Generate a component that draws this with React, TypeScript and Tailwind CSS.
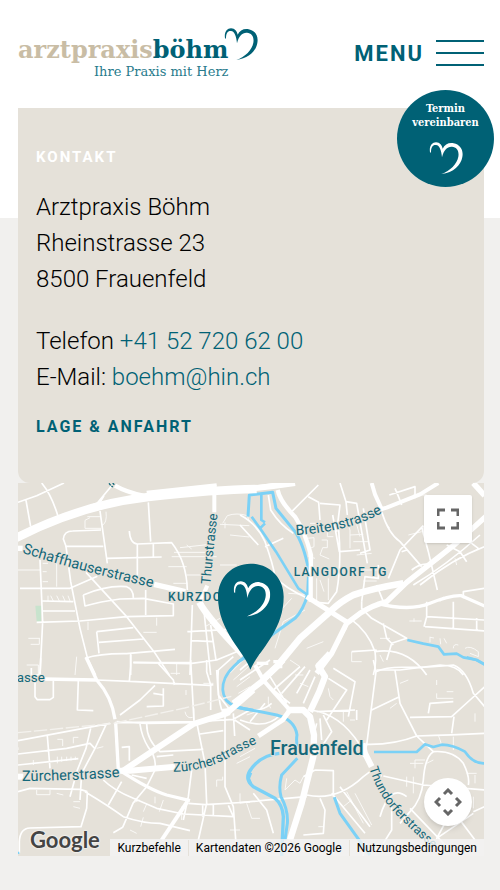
import type { ReactNode } from "react";

type Road = { d: string; width: number };

type Tile = {
  name: string;
  offset: string;
  park?: string;
  water: Road[];
  streets: string;
  lanes: string;
  roads: Road[];
};

const heartPath =
  "M2 31C-1 13 8 1 20 1C32 1 38 11 40 20C46 7 59 1 73 4C92 8 103 23 99 45C95 69 73 92 36 96C63 86 83 66 87 44C90 26 82 15 68 14C54 13 43 24 38 46C36 25 31 10 20 9C10 8 5 16 5 32Z";

// The map is split into four tiles, each drawn in its own coordinates.
const tiles: Tile[] = [
  {
    name: "north-west",
    offset: "translate(-54 -24)",
    park: "M106 392L125 392L123 440L110 440Z",
    water: [],
    streets:
      "M54 82L110 62L192 24M125 24Q155 60 174 124M78 76L92 155M335 32L292 84L190 124M312 62L290 100M198 214L190 192Q192 168 218 168L303 165M195 214H310M300 108L322 265M198 214L212 320L240 460L262 548L287 600M320 250L485 246M445 82L452 200M388 168Q390 205 412 207L515 203Q560 260 562 345M412 207V302M460 205V245M258 292L380 425L462 530L508 600M120 255L128 440L120 600M60 340H210L292 304M128 378L220 380M128 408H225M110 442L240 438L380 425L520 422L520 385M250 360Q320 330 380 335Q400 342 400 368M250 360L255 393Q300 380 360 372L430 370L520 387M437 345V420M290 470L400 458M290 470L297 535M297 502L430 492M255 550Q300 535 380 536L525 523M392 540V600M400 562L570 566L650 555L710 530M577 390L570 600M610 390L632 600M562 470L690 463M575 497L642 500M632 450L648 555",
    lanes:
      "M270 128L255 136V160H303M302 125H262M318 110Q322 145 306 151M54 285H122M170 255V335M128 265H144M128 290H140M128 320H144M144 378V362M160 378L152 362M178 378L170 362M195 378L188 362M210 378L204 362M264 440V465M470 428V452M430 472H470M230 545L225 600M85 490H120M92 508H118V490M80 570H115V600M515 245H650M522 232L628 232M540 218L630 208M575 222L560 210M505 275H560M560 300H610M520 325H562M668 145L682 122Q710 112 742 122L748 140M660 148L748 152M675 142V160M690 180L748 186M660 270H710M615 455L660 430M530 565V600",
    roads: [
      { d: "M40 193Q245 88 445 66T770 42", width: 25 },
      { d: "M345 32Q380 52 430 62", width: 13 },
      { d: "M440 52L650 30", width: 10 },
      { d: "M643 30V112", width: 12 },
      { d: "M462 328L556 350", width: 16 },
      { d: "M54 220H68", width: 16 },
      { d: "M622 332L600 380", width: 12 },
      { d: "M598 382Q620 425 730 540", width: 20 },
    ],
  },
  {
    name: "north-east",
    offset: "translate(666 -24)",
    water: [
      { d: "M24 125L28 60L98 52L108 100L165 170Q190 205 206 285L203 358Q190 405 165 430L95 480L20 545L-8 562", width: 9 },
      { d: "M64 60V135L75 142", width: 8 },
      { d: "M35 125L60 160L75 145M57 155L108 230L175 340L203 360", width: 8 },
      { d: "M502 495L550 506L595 515L612 538L650 536L670 547L710 555L734 568", width: 8 },
    ],
    streets:
      "M85 60L92 105Q120 150 160 175M0 120Q50 145 75 200Q100 270 105 305Q135 340 200 368M0 150L55 210M130 190L75 215M235 30L150 115M205 65L236 82L240 135M240 85L300 90L290 170M300 24L318 80L350 85L382 265M318 80L322 120M296 165Q305 270 290 350L265 385L230 382M278 120L298 230L360 225M370 100L390 225L360 235M465 40Q480 75 485 90M448 60L525 35V70M425 110Q445 175 480 200L545 275M550 152L480 225L445 310M545 155L565 230L592 345M515 285Q545 260 575 270M485 230L500 225M500 320L600 250L734 120M520 330Q620 270 720 180M540 330Q640 250 734 215M365 380L375 305L415 310V270M410 330L430 380M365 380V400L395 430L500 490L455 505L440 555M330 430Q385 470 405 530Q410 570 400 600M430 445L440 490L460 510M405 530Q500 515 560 600M335 530L410 525M410 585H480L600 570Q650 570 670 600M560 380L560 425L552 455M560 425L734 435M555 455L734 468M640 380V460M670 370V350L734 340M710 430V465M620 210L660 230L680 260M675 190L715 220",
    lanes:
      "M210 145H236V165M200 190L222 188V215L205 222V245L225 250M240 165L262 160V185H280M245 195H262V218H248L240 240L268 252M320 140L330 165V220M345 130L360 185M340 200H385M330 180L370 178M350 240L395 235M505 180L545 170M550 180V152M645 250L650 270M370 285H410M370 318H410M380 345H420M230 310V380M265 310V375M240 315L252 350M145 355L195 358M155 370L100 430M195 405L130 440L105 520M420 540L430 560M335 530V560H365M570 485V502M570 487L582 489M600 490L602 508M612 490L620 505M640 520Q640 505 655 510M675 520Q690 510 715 530V545L690 535M508 438H545M522 430V440M440 150L450 160M520 60H560M700 24L715 40M600 380L610 365M50 500L100 470M200 520L250 500M320 460L300 490M420 490H450",
    roads: [
      { d: "M-20 46Q70 38 165 24", width: 18 },
      { d: "M-10 44L150 24", width: 12 },
      { d: "M113 45Q120 80 165 125Q195 170 213 240L212 300V380", width: 13 },
      { d: "M200 365L322 442", width: 15 },
      { d: "M395 24L405 58L425 102L440 98L540 58L595 24", width: 12 },
      { d: "M734 128L640 212L500 322L440 380Q400 390 360 415L320 445L275 535L230 595", width: 16 },
      { d: "M490 325Q400 340 340 360Q300 380 270 410L180 490L110 575L70 612", width: 20 },
      { d: "M410 385Q510 410 570 385T664 362L734 393", width: 10 },
      { d: "M700 24L734 62", width: 17 },
      { d: "M50 565H85", width: 10 },
      { d: "M100 560H122V580", width: 10 },
    ],
  },
  {
    name: "south-west",
    offset: "translate(-54 531)",
    water: [
      { d: "M750 -20Q690 20 675 55Q660 90 678 120Q700 145 760 150", width: 8 },
      { d: "M752 338L745 355L752 372", width: 10 },
      { d: "M54 575V582", width: 8 },
    ],
    streets:
      "M122 -5L120 50M105 65V110L112 119H150L160 112V62M94 24V45H120M235 60L232 150L280 152M290 60L390 64L630 76L640 74M392 -20V20L388 64M400 8H575M475 10L520 60L523 75M465 76L420 120L360 165M345 188L590 185L700 178L750 150M54 242L330 190M54 282L200 265L270 250L284 265M54 315L235 296M142 228L150 325M272 205L258 265L232 330L210 410M320 190L285 265L245 340L240 420M350 185L440 190L575 188M420 192Q425 230 445 262Q470 290 465 330L440 380L400 428L368 502M440 192Q440 240 480 275L610 268M365 262L388 260V302M590 186L615 310L620 430L595 540M600 222L670 212M675 165V380L700 440L710 580M575 330L565 410L550 480M54 395L90 385L240 388L262 395M255 395Q330 440 370 470Q430 490 480 490L570 512M310 360Q340 390 400 415L470 445L550 462L700 470M368 502L340 518M365 365L325 435M262 395L260 445L243 500L90 504Q60 505 58 545V580M565 430L615 434L750 426M608 436V470M640 432V468M685 436L700 470M572 0L582 185M620 0V35L632 75V150M650 30L655 105L690 150M700 160L704 228M704 180L750 210M665 150Q650 100 655 30L700 -10M490 85V138L440 140M490 105L460 100M395 345L440 355M470 290L520 285",
    lanes:
      "M54 262V270M110 390V404H150V390M100 315V300M172 310V290M185 305V290M200 303V290M213 302V290M226 300V290M172 238H188V258M220 250V232H235M190 405L170 400M220 425H240M220 440L240 445M290 265L310 260M400 428L420 420M440 432L430 455M490 420L478 455M430 472L422 500M390 510L410 520M545 480V440M465 430V410M555 155Q560 178 578 172M582 145V180M512 40H540M558 90V105M650 380V360H668V350M710 310L750 290M690 510H720M708 545V580M720 400V430M690 40L730 0M700 60L745 20M710 80L750 50M715 100L750 80M610 70H640",
    roads: [
      { d: "M130 57L290 60", width: 10 },
      { d: "M258 -8L290 60Q335 110 345 178", width: 10 },
      { d: "M347 188L355 330", width: 10 },
      { d: "M365 335L580 192L680 160L760 90", width: 18 },
      { d: "M350 332H390L525 320", width: 18 },
      { d: "M365 335Q450 390 500 405L570 422", width: 10 },
      { d: "M562 425L485 540", width: 12 },
      { d: "M54 350H70", width: 18 },
      { d: "M690 155L665 158", width: 22 },
    ],
  },
  {
    name: "south-east",
    offset: "translate(666 531)",
    water: [
      { d: "M-10 142Q60 155 110 165Q165 180 171 225Q168 240 172 260M172 295L125 345Q115 380 123 410Q145 450 142 490L135 540", width: 9 },
      { d: "M118 280Q65 285 35 325Q10 355 40 380L105 415Q128 435 130 470L125 590", width: 10 },
      { d: "M402 276H530L555 253L580 261L605 254Q640 255 675 275Q700 312 734 310", width: 8 },
      { d: "M283 412L300 460L350 530L390 585", width: 9 },
      { d: "M680 -8L710 0L734 14", width: 8 },
    ],
    streets:
      "M400 0L408 35L380 255L370 290M408 35Q440 20 500 22T640 15Q680 30 700 100L734 140M465 30L480 130L530 228M395 150L475 112M510 172L635 170L690 120L734 80M565 160L570 130L640 125M635 220L642 170M380 253Q460 255 530 228Q640 225 734 220M530 228L580 275Q640 270 670 310Q690 350 685 375M580 275Q555 290 550 360Q545 420 510 455L480 490M430 348L550 375M734 390L550 375M510 445L620 560M620 480L590 535L700 460M700 455L734 440M660 480L705 540M200 405Q290 425 370 350L390 335M0 428Q80 420 200 410M225 330L280 332V410M190 350L225 330M240 415L255 450L250 520L190 525M40 400L80 450L100 520M370 545V590M455 440V510L430 550M420 470Q450 370 500 410M300 380L390 500M275 400L375 520M210 150Q300 160 360 255M230 155L345 150M250 165L275 215L225 290M265 55L320 90L260 180M280 25L345 65L325 170M350 150V180M180 20L100 90L150 130M195 20L125 100M210 30L170 100M225 50L190 130M90 50L140 130M230 190L215 250M240 175L245 240M0 180Q80 210 120 165M15 145Q60 160 95 130M30 185L75 130M0 60L90 0M0 30L60 -20",
    lanes:
      "M20 165L50 155M85 110V130L92 145M40 80L20 100M150 0L180 20M165 45H190M180 70L205 80M265 85L270 110L280 120M310 155V185M345 180H330M480 70L505 60M590 100V115H640M590 75V60M640 95H620M470 130L450 145M525 325V300H555M510 310H550M680 340H710M705 345V370M640 230V270M595 225L605 255M580 300L560 310M20 430L35 475H60M140 355L135 390L165 360L180 370L190 350M0 290L45 265M320 395L370 490M345 400L395 495M310 440L335 420M420 330L425 350M500 350V380M520 350V400M700 410V445M705 160V185M235 500H250M590 490H620",
    roads: [
      { d: "M270 -20L235 18L255 50L238 95L210 155", width: 19 },
      { d: "M140 150H190L210 170L222 225L220 290L185 430L150 540", width: 19 },
      { d: "M150 150L128 180L55 228", width: 15 },
      { d: "M-20 130L65 65L130 0", width: 18 },
      { d: "M65 55L145 145", width: 12 },
      { d: "M45 15L70 60", width: 12 },
      { d: "M368 250L375 280L395 320", width: 18 },
    ],
  },
];

const Heart = ({ className }: { className: string }) => (
  <svg viewBox="0 0 100 96" className={className} fill="currentColor" aria-hidden="true">
    <path d={heartPath} />
  </svg>
);

const MapLabel = ({ path, size, children }: { path: string; size: number; children: ReactNode }) => (
  <text
    fontSize={size}
    fill="#14687a"
    stroke="#e5e1d9"
    strokeWidth="5"
    strokeLinejoin="round"
    paintOrder="stroke"
  >
    <textPath href={`#${path}`}>{children}</textPath>
  </text>
);

const CityMap = () => (
  <svg
    viewBox="0 0 1398 1119"
    className="block w-full bg-[#e5e1d9] font-['Roboto',sans-serif]"
    role="img"
    aria-label="Karte von Frauenfeld"
  >
    <defs>
      <path id="schaffhauser" d="M12 209Q180 265 460 326" />
      <path id="thur" d="M577 304Q585 210 600 80" />
      <path id="breiten" d="M834 156Q1010 145 1110 78" />
      <path id="asse" d="M-4 596H200" />
      <path id="zuercher-west" d="M12 894Q160 894 330 880" />
      <path id="zuercher-east" d="M466 866Q560 865 630 825T750 770" />
      <path id="thundorfer" d="M1054 855Q1080 940 1140 1000T1262 1112" />
    </defs>
    {tiles.map((tile) => (
      <g key={tile.name} transform={tile.offset} fill="none" strokeLinejoin="round">
        {tile.park && <path d={tile.park} fill="#c8e3cd" />}
        <path d={tile.lanes} stroke="#faf9f7" strokeWidth="3" />
        <path d={tile.streets} stroke="#fff" strokeWidth="5" />
      </g>
    ))}
    {tiles.map((tile) => (
      <g key={tile.name} transform={tile.offset} fill="none" strokeLinejoin="round">
        {tile.water.map((river) => (
          <path key={river.d} d={river.d} stroke="#7bd1f6" strokeWidth={river.width} />
        ))}
      </g>
    ))}
    {tiles.map((tile) => (
      <g key={tile.name} transform={tile.offset} fill="none" strokeLinejoin="round">
        {tile.roads.map((road) => (
          <path key={road.d} d={road.d} stroke="#fff" strokeWidth={road.width} />
        ))}
      </g>
    ))}
    <path
      d="M0 749L286 721L500 675L640 640"
      fill="none"
      stroke="#f4f2ee"
      strokeWidth="4"
      strokeDasharray="40 8"
    />
    <path d="M273 1L278 7M284 0L289 5M280 9L285 12" stroke="#14687a" strokeWidth="4" />
    <MapLabel path="schaffhauser" size={44}>Schaffhauserstrasse</MapLabel>
    <MapLabel path="thur" size={40}>Thurstrasse</MapLabel>
    <MapLabel path="breiten" size={42}>Breitenstrasse</MapLabel>
    <MapLabel path="asse" size={40}>asse</MapLabel>
    <MapLabel path="zuercher-west" size={44}>Zürcherstrasse</MapLabel>
    <MapLabel path="zuercher-east" size={40}>Zürcherstrasse</MapLabel>
    <MapLabel path="thundorfer" size={38}>Thundorferstrasse</MapLabel>
    <g fill="#14687a" stroke="#e5e1d9" strokeWidth="5" paintOrder="stroke" fontWeight="500">
      <text x="450" y="353" fontSize="36" letterSpacing="4">KURZDORF</text>
      <text x="827" y="279" fontSize="36" letterSpacing="4">LANGDORF TG</text>
      <text x="756" y="816" fontSize="59">Frauenfeld</text>
    </g>
    <path
      d="M697 560C680 505 600 445 600 341C600 283 644 242 697 242C752 242 797 283 797 341C797 445 720 505 697 560Z"
      fill="#006175"
    />
    <svg x="646" y="293" width="111" height="108" viewBox="0 0 100 96" fill="#fff">
      <path d={heartPath} />
    </svg>
  </svg>
);

const App = () => {
  return (
    <div className="bg-white font-['Roboto',sans-serif] text-black">
      <header className="flex h-27 items-start justify-between pr-4 pl-[18px]">
        <a href="#" className="flex pt-7 font-['DejaVu_Serif',serif]" aria-label="arztpraxisböhm">
          <span className="flex flex-col items-end pt-2">
            <span className="text-[24px] leading-7 font-bold text-[#c9bda5]">
              arztpraxis<span className="text-[#006175]">böhm</span>
            </span>
            <span className="text-[13px] leading-4 text-[#287b8c]">Ihre Praxis mit Herz</span>
          </span>
          <Heart className="-ml-1 h-8 w-[34px] text-[#006175]" />
        </a>
        <button type="button" className="flex items-center gap-3 pt-9 text-[#006175]">
          <span className="text-[22px] leading-9 font-bold tracking-[2px]">MENU</span>
          <svg viewBox="0 0 48 28" className="h-7 w-12" stroke="currentColor" strokeWidth="2" aria-hidden="true">
            <path d="M0 1H48M0 13H48M0 25H48" />
          </svg>
        </button>
      </header>

      <a
        href="#termin"
        className="absolute top-[90px] right-[6px] z-10 flex size-[97px] flex-col items-center rounded-full bg-[#006175] pt-3 text-white"
      >
        <span className="text-center font-['DejaVu_Serif_Condensed','DejaVu_Serif',serif] text-[11px] leading-[14px] font-bold">
          Termin
          <br />
          vereinbaren
        </span>
        <Heart className="mt-3 h-8 w-[34px]" />
      </a>

      <main className="bg-[linear-gradient(#fff_110px,#f1f0ee_110px)] pr-4 pb-[34px] pl-[18px]">
        <section className="rounded-b-xl bg-[#e5e1d9] px-[18px] pt-[37px] pb-11">
          <h2 className="text-[15px] leading-6 font-bold tracking-[2px] text-white">KONTAKT</h2>
          <address className="mt-5 text-[24px] leading-9 font-light not-italic">
            <p>
              Arztpraxis Böhm
              <br />
              Rheinstrasse 23
              <br />
              8500 Frauenfeld
            </p>
            <p className="mt-[26px]">
              Telefon <a href="tel:+41527206200" className="text-[#006175]">+41 52 720 62 00</a>
              <br />
              E-Mail: <a href="mailto:boehm@hin.ch" className="text-[#006175]">boehm@hin.ch</a>
            </p>
          </address>
          <a href="#lage" className="mt-5 block text-[16px] leading-6 font-bold tracking-[2px] text-[#006175]">
            LAGE &amp; ANFAHRT
          </a>
        </section>

        <section className="relative overflow-hidden">
          <CityMap />
          <button
            type="button"
            aria-label="Vollbildansicht"
            className="absolute top-3 right-3 flex size-12 items-center justify-center rounded-xs bg-white text-[#666] shadow-sm"
          >
            <svg viewBox="0 0 22 22" className="size-[22px]" fill="none" stroke="currentColor" strokeWidth="3" aria-hidden="true">
              <path d="M1 8V2H8M14 2H21V8M21 14V20H14M8 20H1V14" />
            </svg>
          </button>
          <button
            type="button"
            aria-label="Kamerasteuerung für die Karte"
            className="absolute right-3 bottom-[30px] flex size-12 items-center justify-center rounded-full bg-white text-[#666] shadow-md"
          >
            <svg viewBox="0 0 28 28" className="size-7" fill="none" stroke="currentColor" strokeWidth="3" aria-hidden="true">
              <path d="M10 6L14 2L18 6M22 10L26 14L22 18M18 22L14 26L10 22M6 18L2 14L6 10" />
            </svg>
          </button>
          <a
            href="#google"
            className="absolute bottom-1 left-3 font-['Lato',sans-serif] text-[22px] leading-6 font-bold text-[#444] [text-shadow:0_0_2px_#fff,0_0_2px_#fff]"
          >
            Google
          </a>
          <div className="absolute right-0 bottom-0 flex h-[17px] items-center divide-x divide-[#e5e1d9] bg-[#f5f5f5]/80 text-[12px] leading-4 whitespace-nowrap">
            <button type="button" className="px-[7px]">Kurzbefehle</button>
            <span className="px-[7px]">Kartendaten ©2026 Google</span>
            <a href="#terms" className="px-[7px]">Nutzungsbedingungen</a>
          </div>
        </section>
      </main>
    </div>
  );
};

export default App;
